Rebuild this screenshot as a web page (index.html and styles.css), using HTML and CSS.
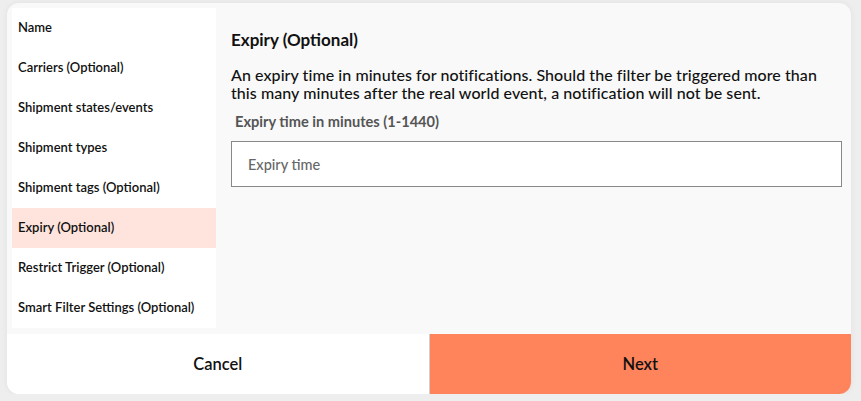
FILE: index.html
```html
<!DOCTYPE html>
<html>
<head>
<meta charset="utf-8">
<link rel="stylesheet" href="styles.css">
</head>
<body>
<div class="card">
  <div class="top">
    <nav class="steps">
      <div class="step">Name</div>
      <div class="step">Carriers (Optional)</div>
      <div class="step">Shipment states/events</div>
      <div class="step">Shipment types</div>
      <div class="step">Shipment tags (Optional)</div>
      <div class="step active">Expiry (Optional)</div>
      <div class="step">Restrict Trigger (Optional)</div>
      <div class="step">Smart Filter Settings (Optional)</div>
    </nav>
    <main class="content">
      <h2 class="title">Expiry (Optional)</h2>
      <p class="desc">An expiry time in minutes for notifications. Should the filter be triggered more than this many minutes after the real world event, a notification will not be sent.</p>
      <label class="label" for="exp">Expiry time in minutes (1-1440)</label>
      <input class="input" id="exp" type="text" placeholder="Expiry time">
    </main>
  </div>
  <div class="footer">
    <button class="btn cancel">Cancel</button>
    <button class="btn next">Next</button>
  </div>
</div>
</body>
</html>
```
FILE: styles.css
```css
html, body {
  margin: 0;
  padding: 0;
  background: #eeeeee;
  font-family: Lato, "Noto Sans", sans-serif;
  color: #111;
}
.card {
  margin: 3px 0 0 7px;
  width: 844px;
  height: 391px;
  background: #f9f9f9;
  border-radius: 12px;
  overflow: hidden;
  display: flex;
  flex-direction: column;
  box-shadow: 0 0 6px rgba(0,0,0,0.06);
}
.top {
  display: flex;
  height: 331px;
  padding: 5px 0 0 5px;
  box-sizing: border-box;
}
.steps {
  width: 204px;
  height: 320px;
  background: #fff;
  display: flex;
  flex-direction: column;
}
.step {
  height: 40px;
  box-sizing: border-box;
  display: flex;
  align-items: center;
  padding: 0 0 2px 6px;
  font-size: 13px;
  font-weight: 600;
  color: #111;
}
.step.active {
  background: #ffe4dd;
}
.content {
  flex: 1;
  padding: 22px 9px 0 15px;
}
.title {
  margin: 0;
  font-size: 17px;
  font-weight: 700;
  line-height: 20px;
}
.desc {
  margin: 16px 0 0;
  font-size: 16px;
  font-weight: 500;
  line-height: 18px;
  letter-spacing: 0.06px;
}
.label {
  display: block;
  margin: 11px 0 0 4px;
  font-size: 14.6px;
  font-weight: 700;
  color: #555;
  line-height: 18px;
}
.input {
  display: block;
  box-sizing: border-box;
  width: 100%;
  height: 46px;
  margin-top: 10px;
  border: 1px solid #888;
  background: #fff;
  padding: 0 16px;
  font-family: inherit;
  font-size: 14.5px;
  font-weight: 500;
  outline: none;
}
.input::placeholder {
  color: #666;
}
.footer {
  display: flex;
  height: 60px;
}
.btn {
  flex: 1;
  border: none;
  margin: 0;
  padding: 0 0 1px;
  font-family: inherit;
  font-size: 16.5px;
  font-weight: 600;
  color: #111;
  cursor: pointer;
}
.cancel {
  background: #fff;
}
.next {
  background: #ff835b;
  border-left: 1px solid #cfcfcf;
}
```
